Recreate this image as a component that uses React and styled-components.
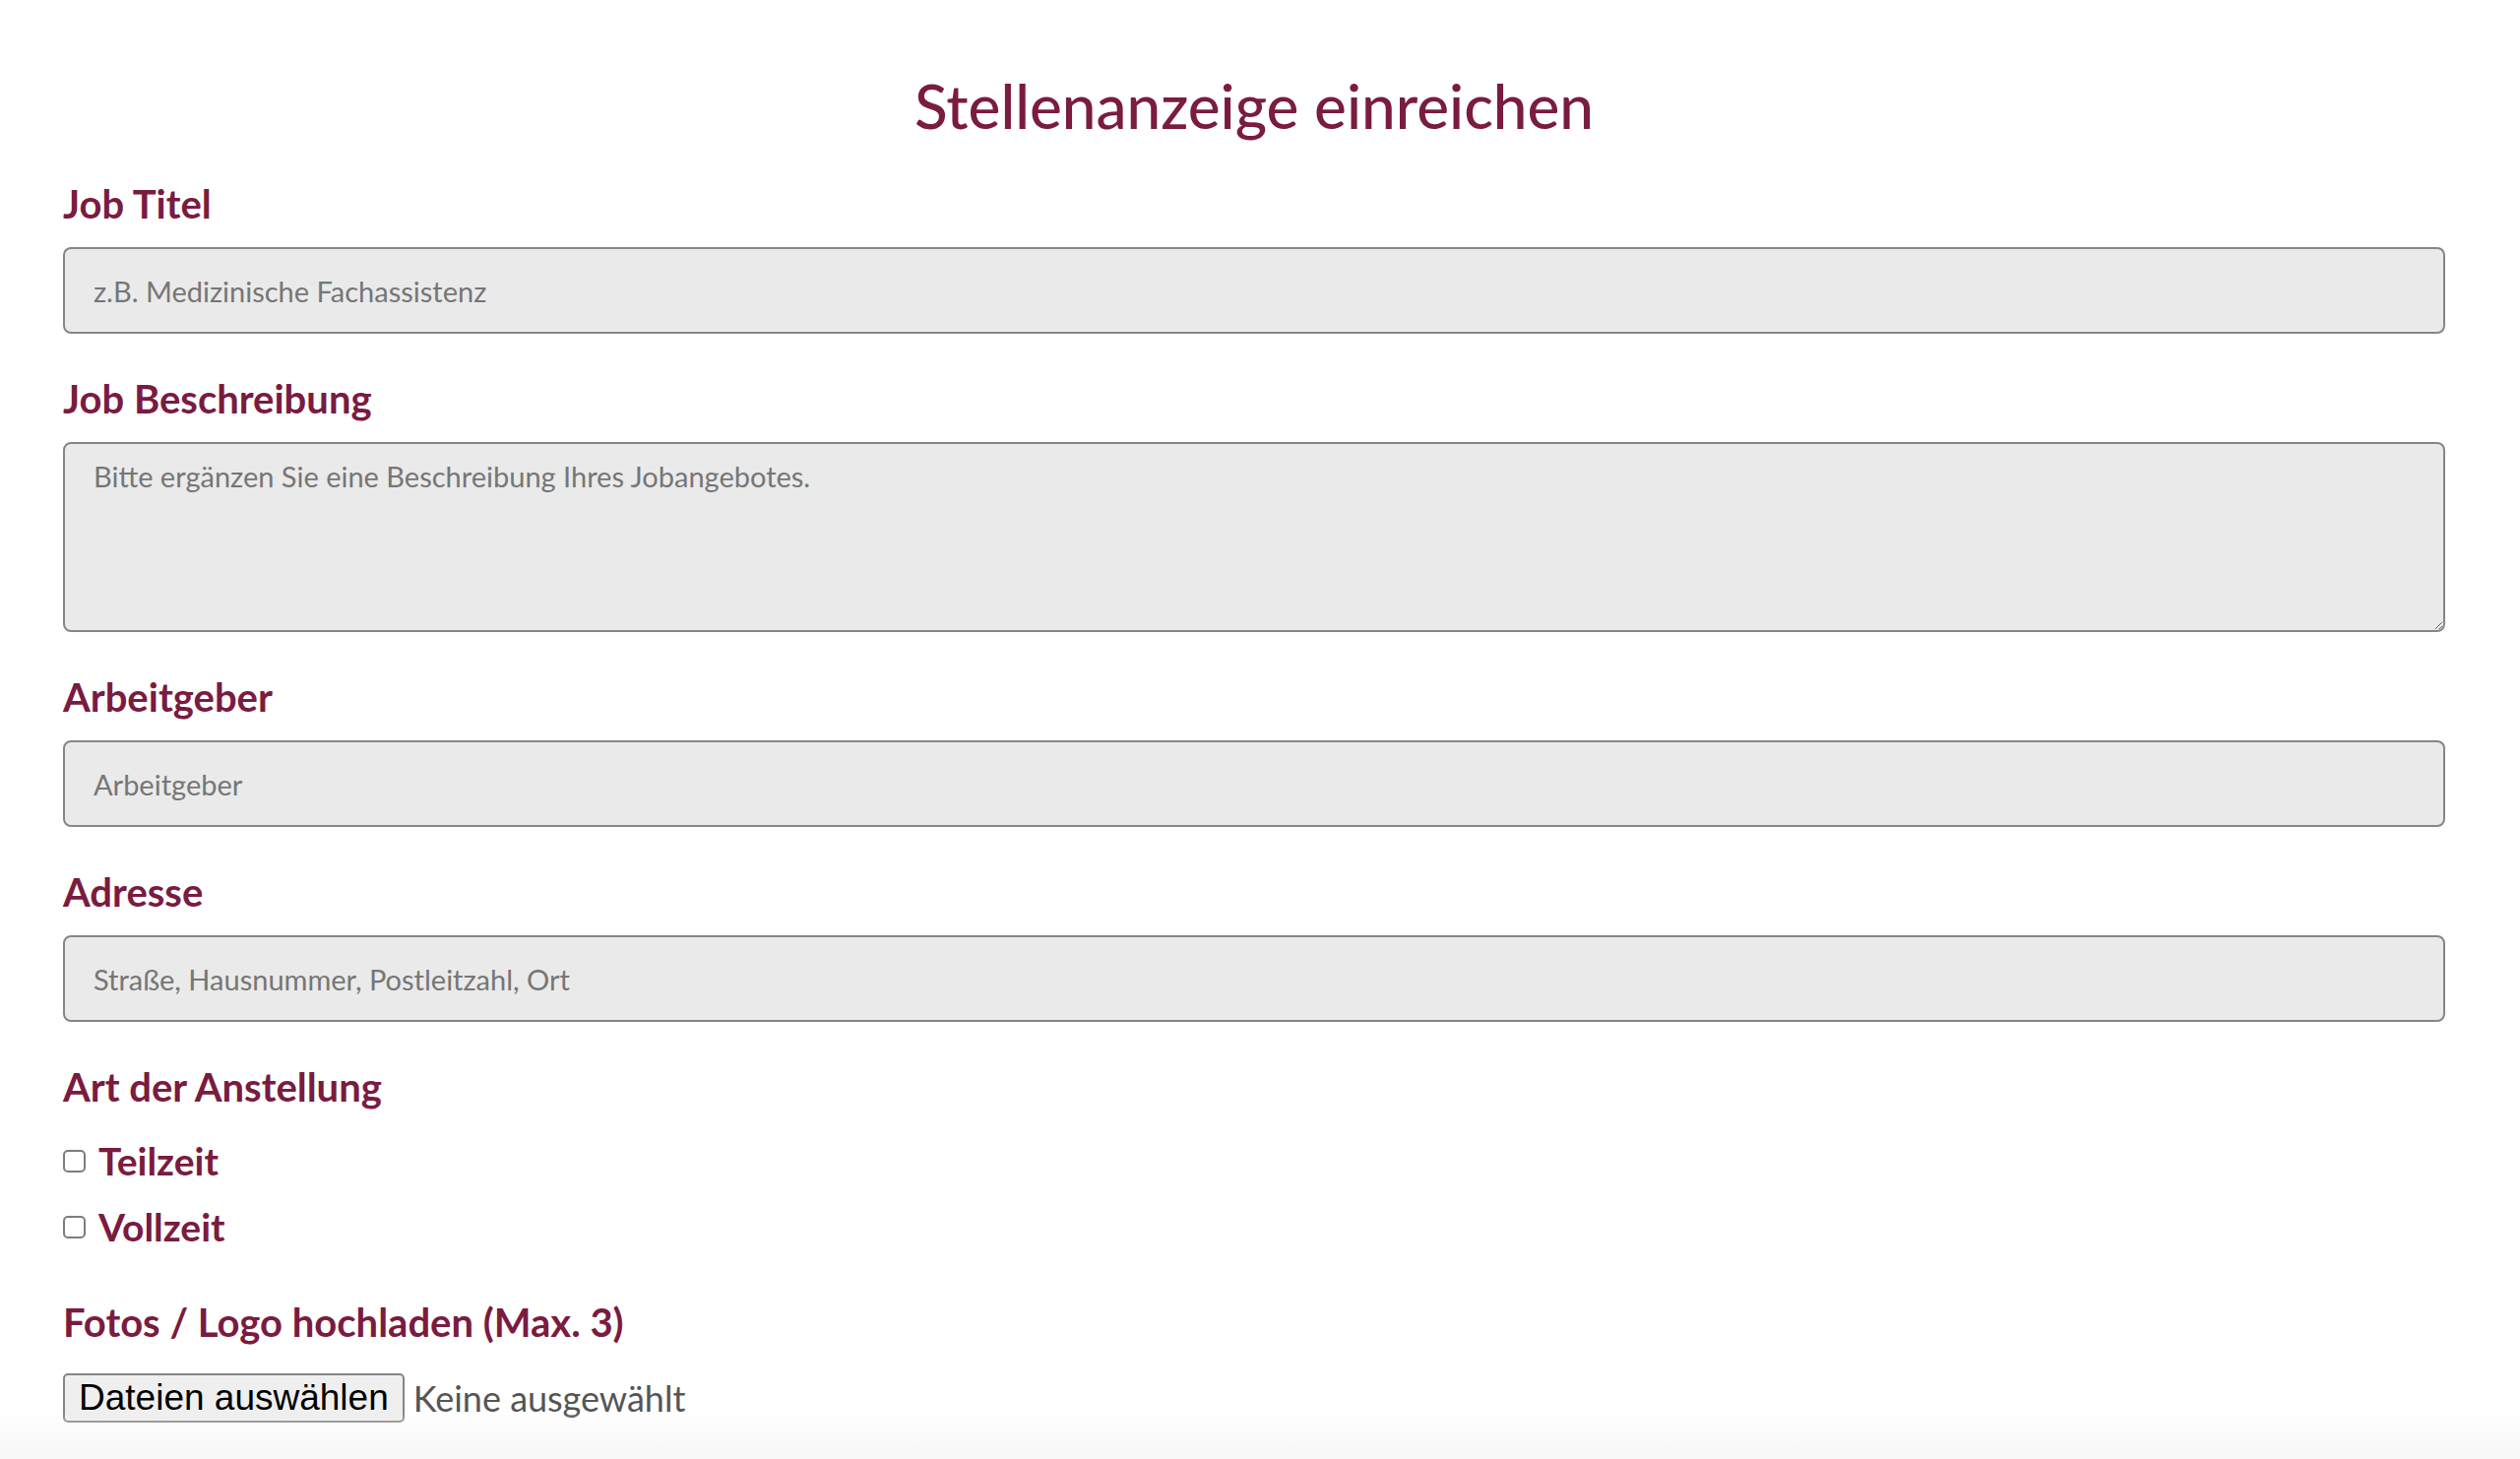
import React from 'react';
import styled, { createGlobalStyle } from 'styled-components';

const GlobalStyle = createGlobalStyle`
    html, body {
        margin: 0;
        padding: 0;
        background: #ffffff;
    }
    body {
        font-family: "Lato", "Liberation Sans", sans-serif;
    }
`;

const StyledPage = styled.div`
    padding: 70px 76px 60px 64px;
`;

const StyledTitle = styled.h1`
    margin: 0 0 41px;
    color: #7a1b40;
    font-family: "Lato", sans-serif;
    font-weight: 500;
    font-size: 62px;
    line-height: 74px;
    text-align: center;
`;

const StyledForm = styled.form`
    display: flex;
    flex-direction: column;
`;

const StyledField = styled.div`
    display: flex;
    flex-direction: column;
    margin-bottom: 44px;
`;

const StyledLabel = styled.label`
    display: block;
    margin: 0 0 ${props => props.$gap || 22}px;
    color: #7a1b40;
    font-weight: 700;
    font-size: 40px;
    line-height: 44px;
`;

const fieldBase = `
    box-sizing: border-box;
    width: 100%;
    margin: 0;
    border: 2px solid #868686;
    border-radius: 8px;
    background: #eaeaea;
    color: #333;
    font-family: "Lato", sans-serif;
    font-size: 29px;
    outline: none;
    &::placeholder {
        color: #767676;
        opacity: 1;
    }
`;

const StyledInput = styled.input`
    ${fieldBase}
    height: 88px;
    padding: 0 29px;
`;

const StyledTextArea = styled.textarea`
    ${fieldBase}
    height: 193px;
    padding: 14px 29px;
    line-height: 38px;
    resize: vertical;
`;

const StyledOptions = styled.div`
    display: flex;
    flex-direction: column;
    gap: 23px;
    margin-bottom: 53px;
`;

const StyledOption = styled.label`
    display: flex;
    align-items: center;
    gap: 13px;
    color: #7a1b40;
    font-weight: 700;
    font-size: 39px;
    line-height: 44px;
    cursor: pointer;
`;

const StyledCheckbox = styled.input.attrs({ type: 'checkbox' })`
    appearance: none;
    box-sizing: border-box;
    width: 23px;
    height: 23px;
    margin: 0;
    border: 2px solid #7d7d7d;
    border-radius: 5px;
    background: #fff;
`;

const StyledUpload = styled.div`
    display: flex;
    align-items: center;
    gap: 9px;
`;

const StyledFileButton = styled.button`
    box-sizing: border-box;
    height: 50px;
    padding: 0 14px;
    border: 2px solid #858585;
    border-radius: 5px;
    background: #efefef;
    color: #000;
    font-family: "Liberation Sans", Arial, sans-serif;
    font-size: 37px;
    line-height: 44px;
`;

const StyledFileText = styled.span`
    color: #555;
    font-size: 36px;
    line-height: 44px;
`;

const StyledFade = styled.div`
    position: fixed;
    left: 0;
    right: 0;
    bottom: 0;
    height: 48px;
    pointer-events: none;
    background: linear-gradient(to bottom, rgba(255,255,255,0), #f7f7f7);
`;

const fields = [
    { id: 'title', label: 'Job Titel', placeholder: 'z.B. Medizinische Fachassistenz' },
    { id: 'desc', label: 'Job Beschreibung', placeholder: 'Bitte ergänzen Sie eine Beschreibung Ihres Jobangebotes.', multiline: true },
    { id: 'employer', label: 'Arbeitgeber', placeholder: 'Arbeitgeber' },
    { id: 'address', label: 'Adresse', placeholder: 'Straße, Hausnummer, Postleitzahl, Ort' },
];

class App extends React.Component {
    renderFields(){
        return fields.map(field => {
            return (
                <StyledField key={field.id}>
                    <StyledLabel htmlFor={field.id}>{field.label}</StyledLabel>
                    {field.multiline
                        ? <StyledTextArea id={field.id} placeholder={field.placeholder} />
                        : <StyledInput id={field.id} type="text" placeholder={field.placeholder} />}
                </StyledField>
            );
        })
    }
    render(){
        return(
            <StyledPage>
                <GlobalStyle />
                <StyledTitle>Stellenanzeige einreichen</StyledTitle>
                <StyledForm onSubmit={e => e.preventDefault()}>
                    {this.renderFields()}
                    <StyledLabel as="p" $gap={31}>Art der Anstellung</StyledLabel>
                    <StyledOptions>
                        <StyledOption><StyledCheckbox />Teilzeit</StyledOption>
                        <StyledOption><StyledCheckbox />Vollzeit</StyledOption>
                    </StyledOptions>
                    <StyledLabel $gap={30}>Fotos / Logo hochladen (Max. 3)</StyledLabel>
                    <StyledUpload>
                        <StyledFileButton type="button">Dateien auswählen</StyledFileButton>
                        <StyledFileText>Keine ausgewählt</StyledFileText>
                    </StyledUpload>
                </StyledForm>
                <StyledFade />
            </StyledPage>
        )
    }
}

export default App;
